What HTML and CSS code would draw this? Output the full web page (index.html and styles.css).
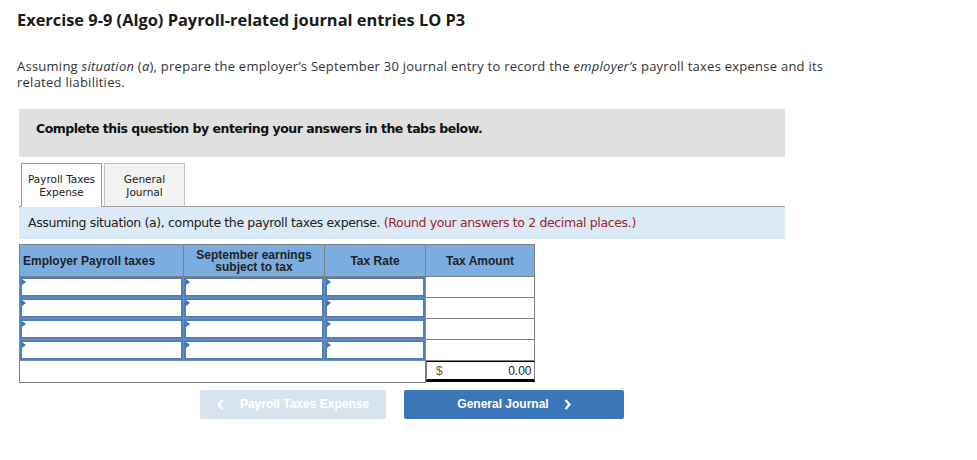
FILE: index.html
```html
<!DOCTYPE html>
<html lang="en">
<head>
    <meta charset="UTF-8">
    <title>Exercise 9-9</title>
    <link rel="stylesheet" href="styles.css">
</head>
<body>
<div class="page">
    <h1 class="title">Exercise 9-9 (Algo) Payroll-related journal entries LO P3</h1>
    <p class="prompt">Assuming <i>situation</i> (<i>a</i>), prepare the employer’s September 30 journal entry to record the <i>employer’s</i> payroll taxes expense and its related liabilities.</p>

    <div class="question">
        <div class="instructions">Complete this question by entering your answers in the tabs below.</div>
        <div class="tabs">
            <div class="tab active">Payroll Taxes<br>Expense</div>
            <div class="tab">General<br>Journal</div>
        </div>
        <div class="info-bar">Assuming situation (a), compute the payroll taxes expense. <span class="hint">(Round your answers to 2 decimal places.)</span></div>

        <table class="tax-table">
            <thead>
            <tr>
                <th class="col-name left">Employer Payroll taxes</th>
                <th class="col-earn">September earnings<br>subject to tax</th>
                <th class="col-rate">Tax Rate</th>
                <th class="col-amount">Tax Amount</th>
            </tr>
            </thead>
            <tbody>
            <tr>
                <td class="input-cell"><div class="input"></div></td>
                <td class="input-cell"><div class="input"></div></td>
                <td class="input-cell"><div class="input"></div></td>
                <td></td>
            </tr>
            <tr>
                <td class="input-cell"><div class="input"></div></td>
                <td class="input-cell"><div class="input"></div></td>
                <td class="input-cell"><div class="input"></div></td>
                <td></td>
            </tr>
            <tr>
                <td class="input-cell"><div class="input"></div></td>
                <td class="input-cell"><div class="input"></div></td>
                <td class="input-cell"><div class="input"></div></td>
                <td></td>
            </tr>
            <tr>
                <td class="input-cell"><div class="input"></div></td>
                <td class="input-cell"><div class="input"></div></td>
                <td class="input-cell"><div class="input"></div></td>
                <td></td>
            </tr>
            <tr class="total-row">
                <td colspan="3"></td>
                <td class="total"><span>$</span><span>0.00</span></td>
            </tr>
            </tbody>
        </table>

        <div class="nav">
            <button class="nav-btn prev">
                <svg class="chevron" width="7" height="11" viewBox="0 0 7 11"><path d="M5.5 1 L1.5 5.5 L5.5 10" fill="none" stroke="#ffffff" stroke-width="2.2"/></svg>
                <span>Payroll Taxes Expense</span>
            </button>
            <button class="nav-btn next">
                <span>General Journal</span>
                <svg class="chevron" width="7" height="11" viewBox="0 0 7 11"><path d="M1.5 1 L5.5 5.5 L1.5 10" fill="none" stroke="#ffffff" stroke-width="2.2"/></svg>
            </button>
        </div>
    </div>
</div>
</body>
</html>
```

FILE: styles.css
```css
body{
    margin: 0;
    background: #ffffff;
}
.page{
    padding: 10px 0 0 17px;
    width: 815px;
    font-family: "Open Sans", "Lato", sans-serif;
    color: #222222;
}
.title{
    margin: 0;
    font-size: 16.4px;
    font-weight: bold;
    line-height: 20px;
    color: #1a1a1a;
}
.prompt{
    margin: 28px 0 0 0;
    font-size: 13px;
    letter-spacing: 0.25px;
    line-height: 16px;
    color: #333333;
}
.question{
    margin: 19px 0 0 2px;
    width: 766px;
}
.instructions{
    background: #e0e0e0;
    height: 48px;
    line-height: 40px;
    padding-left: 17px;
    font-family: "DejaVu Sans", Verdana, sans-serif;
    font-size: 12.5px;
    letter-spacing: -0.5px;
    font-weight: bold;
    color: #111111;
}
.tabs{
    display: flex;
    gap: 2px;
    margin: 6px 0 0 2px;
}
.tab{
    width: 81px;
    height: 43px;
    border: 1px solid #c4c4c4;
    border-bottom: none;
    background: #f2f2f2;
    font-family: "DejaVu Sans", Verdana, sans-serif;
    font-size: 10.5px;
    line-height: 13px;
    text-align: center;
    padding-top: 9px;
    box-sizing: border-box;
    color: #222222;
}
.tab.active{
    background: #ffffff;
    border: 1px solid #9a9a9a;
    border-bottom: none;
    height: 44px;
    margin-bottom: -1px;
}
.info-bar{
    border-top: 1px solid #a0a0a0;
    background: #dbeaf7;
    height: 32px;
    line-height: 32px;
    padding-left: 9px;
    font-family: "DejaVu Sans", Verdana, sans-serif;
    font-size: 12.5px;
    letter-spacing: -0.36px;
    color: #222222;
}
.info-bar .hint{
    color: #a3222b;
}
.tax-table{
    margin-top: 5px;
    border-collapse: collapse;
    font-family: "Liberation Sans", Arial, sans-serif;
    font-size: 12px;
}
.tax-table th{
    background: #7aaee3;
    border: 1px solid #7f7f7f;
    height: 31px;
    padding: 0;
    font-weight: bold;
    line-height: 12px;
    color: #222222;
}
.tax-table th.left{
    text-align: left;
    padding-left: 3px;
}
.col-name{ width: 160px; }
.col-earn{ width: 140px; }
.col-rate{ width: 100px; }
.col-amount{ width: 108px; }
.tax-table td{
    border: 1px solid #7f7f7f;
    height: 20px;
    padding: 0;
}
.tax-table td.input-cell{
    border-color: #6e8fb8;
}
.input{
    position: relative;
    height: 20px;
    border: 2px solid #4f80bd;
    box-sizing: border-box;
    background: #ffffff;
}
.input::before{
    content: "";
    position: absolute;
    left: 0;
    top: 0;
    border-left: 4px solid #3d74c0;
    border-top: 3px solid transparent;
    border-bottom: 3px solid transparent;
}
.total-row td{
    height: 19px;
}
.tax-table td.total{
    display: flex;
    justify-content: space-between;
    align-items: center;
    padding: 0 2px 0 9px;
    border-top: 1px solid #000000;
    border-bottom: 3px solid #000000;
    box-sizing: border-box;
    height: 21px;
    color: #222222;
}
.total span:first-child{
    color: #7a5a1a;
}
.nav{
    display: flex;
    gap: 18px;
    margin: 7px 0 0 181px;
}
.nav-btn{
    display: flex;
    justify-content: center;
    align-items: center;
    height: 29px;
    border: none;
    border-radius: 2px;
    color: #ffffff;
    font-family: "Liberation Sans", Arial, sans-serif;
    font-size: 12px;
    font-weight: bold;
    padding: 0;
}
.nav-btn.prev{
    width: 186px;
    gap: 16px;
    background: #d8e3f0;
}
.nav-btn.next{
    width: 220px;
    gap: 15px;
    background: #3a76b8;
}
```
